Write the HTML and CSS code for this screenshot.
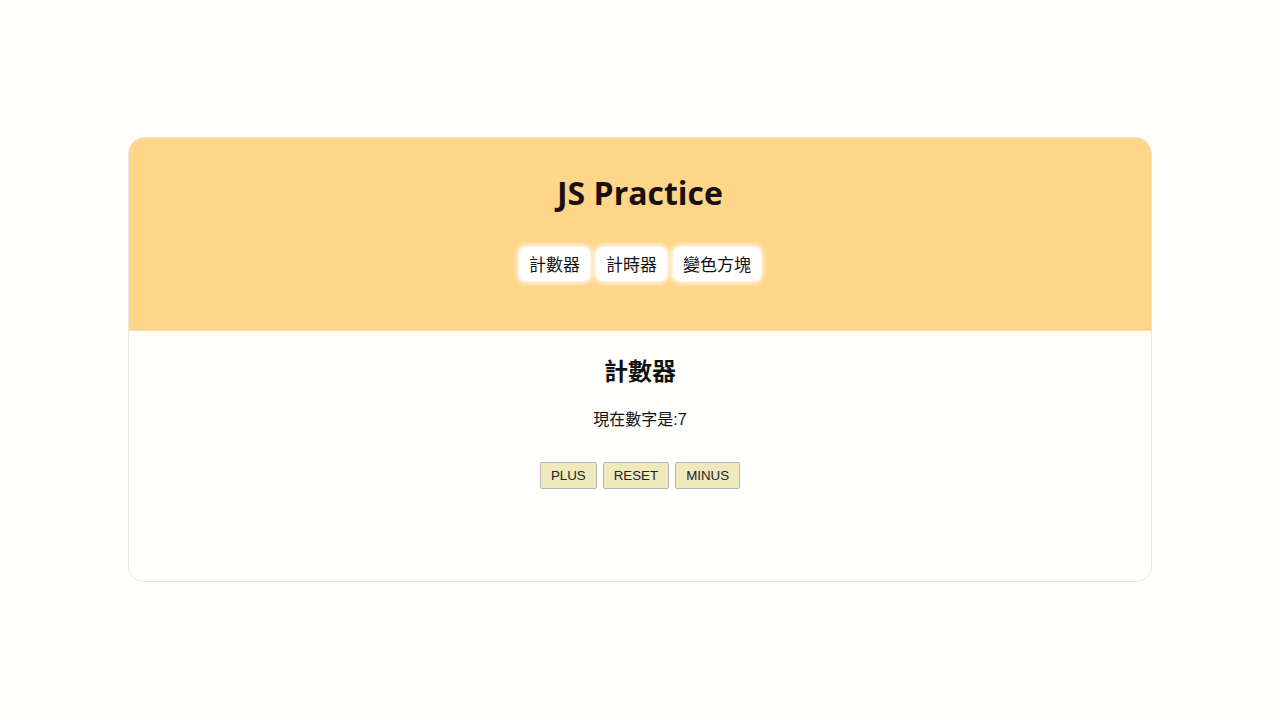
FILE: index.html
```html
<!DOCTYPE html>
<html lang="zh-Hant">
<head>
<meta charset="utf-8">
<title>JS Practice</title>
<link rel="stylesheet" href="styles.css">
</head>
<body>
<div class="card">
  <header class="card-header">
    <h1 class="title">JS Practice</h1>
    <nav class="tabs">
      <button class="tab">計數器</button>
      <button class="tab">計時器</button>
      <button class="tab">變色方塊</button>
    </nav>
  </header>
  <section class="card-body">
    <h2 class="section-title">計數器</h2>
    <p class="count">現在數字是:7</p>
    <div class="actions">
      <button class="action">PLUS</button>
      <button class="action">RESET</button>
      <button class="action">MINUS</button>
    </div>
  </section>
</div>
</body>
</html>
```
FILE: styles.css
```css
html, body {
  margin: 0;
  padding: 0;
  background: #fffffd;
}
body {
  padding-top: 137px;
  font-family: "Liberation Sans", "Noto Sans CJK TC", sans-serif;
  color: #111;
}
.card {
  width: 1024px;
  margin: 0 auto;
  border: 1px solid #e6e4e0;
  border-radius: 16px;
  overflow: hidden;
  box-sizing: border-box;
  background: #fffffd;
}
.card-header {
  background: #ffd68a;
  padding: 33px 0 50px;
  text-align: center;
}
.title {
  margin: 0;
  font-family: "Open Sans", "Noto Sans CJK TC", sans-serif;
  font-weight: 700;
  font-size: 32px;
  line-height: 44px;
  color: #1a1010;
}
.tabs {
  margin-top: 32px;
  display: flex;
  justify-content: center;
  gap: 6px;
}
.tab {
  font-family: "Noto Sans CJK TC", sans-serif;
  font-size: 17px;
  line-height: 24px;
  padding: 5px 10px;
  background: #fff;
  color: #111;
  border: none;
  border-radius: 7px;
  box-shadow: 0 0 4px 2px rgba(255,255,255,0.9);
  cursor: pointer;
}
.card-body {
  padding: 24px 0 92px;
  text-align: center;
}
.section-title {
  margin: 0;
  font-family: "Noto Sans CJK TC", sans-serif;
  font-size: 24px;
  line-height: 30px;
  font-weight: 700;
}
.count {
  margin: 24px 0 0;
  font-size: 16px;
  line-height: 22px;
}
.actions {
  margin-top: 31px;
  display: flex;
  justify-content: center;
  gap: 6px;
}
.action {
  font-family: "Liberation Sans", sans-serif;
  font-size: 13.333px;
  line-height: 15px;
  padding: 5px 10px;
  background: #efe9bb;
  color: #222;
  border: 1px solid #b8b8b0;
  border-radius: 2px;
}
```
